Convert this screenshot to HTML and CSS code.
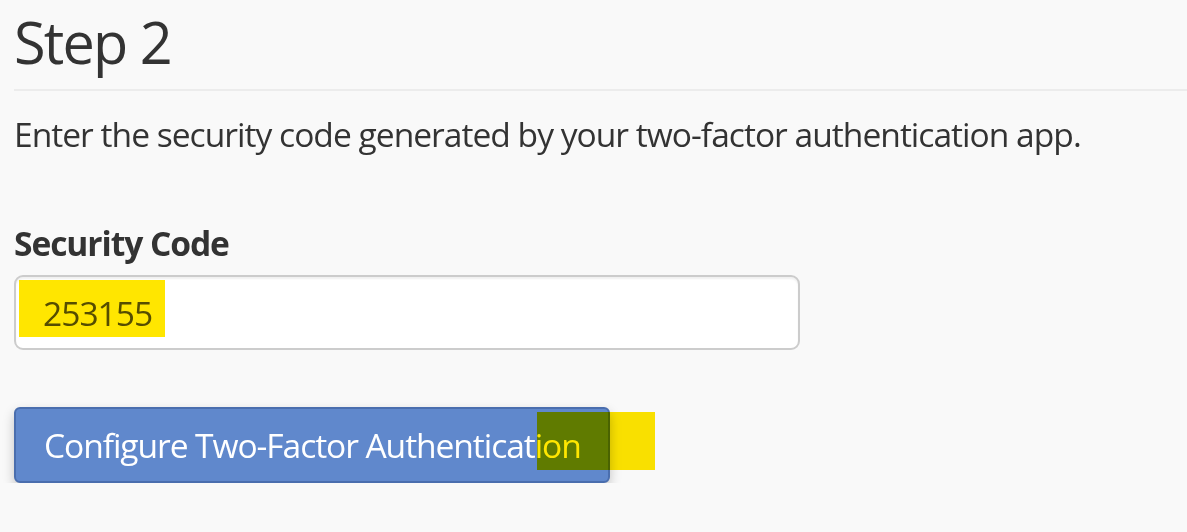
FILE: index.html
```html
<!DOCTYPE html>
<html>
<head>
<meta charset="utf-8">
<link rel="stylesheet" href="styles.css">
</head>
<body>
<div class="page">
  <h1 class="title">Step 2</h1>
  <hr class="rule">
  <p class="intro">Enter the security code generated by your two-factor authentication app.</p>
  <label class="label" for="code">Security Code</label>
  <div class="field">
    <input id="code" class="input" type="text" value="253155">
    <span class="mark mark-input"></span>
  </div>
  <div class="actions">
    <button class="btn" type="button">Configure Two-Factor Authentication</button>
    <span class="mark mark-btn"></span>
  </div>
</div>
</body>
</html>
```
FILE: styles.css
```css
html, body {
  margin: 0;
  padding: 0;
  background: #f9f9f9;
}
.page {
  padding: 0 0 0 14px;
  font-family: "Open Sans", "Liberation Sans", sans-serif;
  color: #333;
  display: flex;
  flex-direction: column;
  align-items: flex-start;
}
.title {
  font-size: 57.6px;
  font-weight: 400;
  letter-spacing: -0.031em;
  line-height: 63px;
  margin: 10px 0 0 0;
}
.rule {
  align-self: stretch;
  border: 0;
  border-top: 2px solid #ececec;
  margin: 16px 0 0 0;
  height: 0;
}
.intro {
  font-size: 33.6px;
  letter-spacing: -0.0295em;
  line-height: 48px;
  margin: 19px 0 0 0;
}
.label {
  display: block;
  font-size: 33.6px;
  font-weight: 700;
  letter-spacing: -0.032em;
  line-height: 48px;
  margin-top: 61px;
}
.field {
  position: relative;
  margin-top: 8px;
}
.input {
  box-sizing: border-box;
  width: 786px;
  height: 75px;
  border: 2px solid #cccccc;
  border-radius: 9px;
  background: #fff;
  box-shadow: inset 0 2px 2px rgba(0,0,0,0.06);
  padding: 0 0 0 27px;
  font-family: "Open Sans", "Liberation Sans", sans-serif;
  letter-spacing: -0.03em;
  font-size: 33.6px;
  color: #555;
  outline: none;
  display: block;
}
.actions {
  position: relative;
  margin-top: 57px;
}
.btn {
  box-sizing: border-box;
  width: 596px;
  height: 76px;
  background: #6088cc;
  border: 2px solid #4a6eae;
  border-radius: 6px;
  color: #fff;
  font-family: "Open Sans", "Liberation Sans", sans-serif;
  letter-spacing: -0.032em;
  font-size: 33.6px;
  white-space: nowrap;
  padding: 0 0 0 28px;
  text-align: left;
  box-shadow: 0 5px 12px rgba(0,0,0,0.22);
  display: block;
}
.mark {
  position: absolute;
  background: #ffe600;
  mix-blend-mode: multiply;
  pointer-events: none;
}
.mark-input {
  left: 5px;
  top: 5px;
  width: 146px;
  height: 57px;
}
.mark-btn {
  left: 523px;
  top: 5px;
  width: 118px;
  height: 58px;
}
```
